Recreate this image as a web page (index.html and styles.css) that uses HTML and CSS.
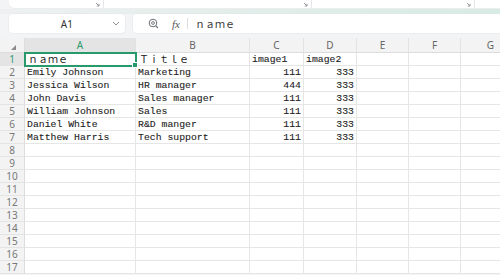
FILE: index.html
```html
<!DOCTYPE html>
<html>
<head>
<meta charset="utf-8">
<link rel="stylesheet" href="styles.css">
</head>
<body>
<div class="app">
  <div class="ribbon-wrap">
    <div class="ribbon">
      <div class="group g1"><svg class="launch" width="5" height="5" viewBox="0 0 5 5"><path d="M1 1 L4 4 M4 1.8 V4 H1.8" stroke="#8a8f94" stroke-width="0.9" fill="none"/></svg></div>
      <div class="group g2"><svg class="launch" width="5" height="5" viewBox="0 0 5 5"><path d="M1 1 L4 4 M4 1.8 V4 H1.8" stroke="#8a8f94" stroke-width="0.9" fill="none"/></svg></div>
      <div class="group g3"><svg class="launch" width="5" height="5" viewBox="0 0 5 5"><path d="M1 1 L4 4 M4 1.8 V4 H1.8" stroke="#8a8f94" stroke-width="0.9" fill="none"/></svg></div>
      <div class="group g4"></div>
    </div>
    <div class="band"></div>
  </div>
  <div class="fbar">
    <div class="namebox">
      <span class="ref">A1</span>
      <svg class="chev" width="8" height="5" viewBox="0 0 8 5"><path d="M1 1 L4 4 L7 1" stroke="#8c9096" stroke-width="1" fill="none"/></svg>
    </div>
    <div class="formula">
      <svg class="zoom" width="11" height="11" viewBox="0 0 11 11"><circle cx="5" cy="5" r="3.8" stroke="#6b7075" stroke-width="1" fill="none"/><circle cx="5" cy="5" r="1.4" stroke="#6b7075" stroke-width="0.9" fill="none"/><path d="M7.8 7.8 L10 10" stroke="#6b7075" stroke-width="1.1"/></svg>
      <span class="fx">fx</span>
      <span class="sep"></span>
      <span class="ftext">ｎａｍｅ</span>
    </div>
  </div>
  <div class="sheet">
    <div class="corner"><span class="tri"></span></div>
    <div class="ch sel">A</div><div class="ch">B</div><div class="ch">C</div><div class="ch">D</div><div class="ch">E</div><div class="ch">F</div><div class="ch">G</div>

    <div class="rh sel">1</div><div class="c active fw">ｎａｍｅ</div><div class="c fw">Ｔｉｔｌｅ</div><div class="c">image1</div><div class="c">image2</div><div class="c"></div><div class="c"></div><div class="c"></div>
    <div class="rh">2</div><div class="c">Emily Johnson</div><div class="c">Marketing</div><div class="c num">111</div><div class="c num">333</div><div class="c"></div><div class="c"></div><div class="c"></div>
    <div class="rh">3</div><div class="c">Jessica Wilson</div><div class="c">HR manager</div><div class="c num">444</div><div class="c num">333</div><div class="c"></div><div class="c"></div><div class="c"></div>
    <div class="rh">4</div><div class="c">John Davis</div><div class="c">Sales manager</div><div class="c num">111</div><div class="c num">333</div><div class="c"></div><div class="c"></div><div class="c"></div>
    <div class="rh">5</div><div class="c">William Johnson</div><div class="c">Sales</div><div class="c num">111</div><div class="c num">333</div><div class="c"></div><div class="c"></div><div class="c"></div>
    <div class="rh">6</div><div class="c">Daniel White</div><div class="c">R&amp;D manger</div><div class="c num">111</div><div class="c num">333</div><div class="c"></div><div class="c"></div><div class="c"></div>
    <div class="rh">7</div><div class="c">Matthew Harris</div><div class="c">Tech support</div><div class="c num">111</div><div class="c num">333</div><div class="c"></div><div class="c"></div><div class="c"></div>
    <div class="rh">8</div><div class="c"></div><div class="c"></div><div class="c"></div><div class="c"></div><div class="c"></div><div class="c"></div><div class="c"></div>
    <div class="rh">9</div><div class="c"></div><div class="c"></div><div class="c"></div><div class="c"></div><div class="c"></div><div class="c"></div><div class="c"></div>
    <div class="rh">10</div><div class="c"></div><div class="c"></div><div class="c"></div><div class="c"></div><div class="c"></div><div class="c"></div><div class="c"></div>
    <div class="rh">11</div><div class="c"></div><div class="c"></div><div class="c"></div><div class="c"></div><div class="c"></div><div class="c"></div><div class="c"></div>
    <div class="rh">12</div><div class="c"></div><div class="c"></div><div class="c"></div><div class="c"></div><div class="c"></div><div class="c"></div><div class="c"></div>
    <div class="rh">13</div><div class="c"></div><div class="c"></div><div class="c"></div><div class="c"></div><div class="c"></div><div class="c"></div><div class="c"></div>
    <div class="rh">14</div><div class="c"></div><div class="c"></div><div class="c"></div><div class="c"></div><div class="c"></div><div class="c"></div><div class="c"></div>
    <div class="rh">15</div><div class="c"></div><div class="c"></div><div class="c"></div><div class="c"></div><div class="c"></div><div class="c"></div><div class="c"></div>
    <div class="rh">16</div><div class="c"></div><div class="c"></div><div class="c"></div><div class="c"></div><div class="c"></div><div class="c"></div><div class="c"></div>
    <div class="rh">17</div><div class="c"></div><div class="c"></div><div class="c"></div><div class="c"></div><div class="c"></div><div class="c"></div><div class="c"></div>
  </div>
</div>
</body>
</html>
```

FILE: styles.css
```css
* { box-sizing: border-box; }
html, body { margin: 0; padding: 0; }
body {
  width: 500px;
  height: 275px;
  overflow: hidden;
  background: #f3f4f5;
  font-family: "Noto Sans", Roboto, sans-serif;
}
.app { display: flex; flex-direction: column; width: 500px; }

.ribbon-wrap { height: 14px; display: flex; flex-direction: column; }
.ribbon {
  margin-left: 9px;
  height: 8px;
  background: #ffffff;
  border-bottom-left-radius: 5px;
  display: flex;
  box-shadow: 0 0.5px 1px rgba(0,0,0,0.06);
}
.group {
  height: 8px;
  border-right: 1px solid #e4e6e8;
  display: flex;
  justify-content: flex-end;
  align-items: flex-start;
  padding: 2px 3px 0 0;
}
.g1 { width: 95px; }
.g2 { width: 208px; }
.g3 { width: 163px; }
.g4 { flex: 1; border-right: none; }
.launch { display: block; }
.band {
  margin-top: 1px;
  height: 5px;
  background: linear-gradient(to right, #eef0f1 0%, #e4eeeb 40%, #d6ebe4 100%);
}

.fbar {
  height: 24px;
  display: flex;
  align-items: flex-start;
  padding-left: 9px;
}
.namebox {
  width: 116px;
  height: 19px;
  background: #fff;
  border-radius: 4px;
  position: relative;
  display: flex;
  align-items: center;
  justify-content: center;
  box-shadow: 0 0 0 0.5px #e3e5e7;
}
.ref { font-size: 10px; color: #333; letter-spacing: 0.2px; }
.chev { position: absolute; right: 5px; top: 7px; }
.formula {
  margin-left: 8px;
  flex: 1;
  height: 19px;
  background: #fff;
  border-radius: 4px 0 0 4px;
  display: flex;
  align-items: center;
  padding-left: 15px;
  box-shadow: 0 0 0 0.5px #e3e5e7;
}
.zoom { display: block; }
.fx {
  margin-left: 13px;
  font-family: "Liberation Serif", serif;
  font-style: italic;
  font-size: 11px;
  color: #555;
}
.sep {
  margin-left: 7px;
  width: 1px;
  height: 11px;
  background: #dcdfe2;
}
.ftext {
  margin-left: 7px;
  font-family: "Noto Sans CJK SC", sans-serif;
  font-size: 10px;
  color: #333;
}

.sheet {
  display: grid;
  grid-template-columns: 25px 111px 114px 54px 53px 52px 52px 60px;
  grid-template-rows: 15px repeat(17, 13px);
  background: #fff;
}
.corner {
  background: #f3f3f3;
  border-right: 1px solid #dedede;
  border-bottom: 1px solid #dedede;
  position: relative;
}
.tri {
  position: absolute;
  left: 11px;
  top: 7px;
  width: 0; height: 0;
  border-left: 5px solid transparent;
  border-bottom: 5px solid #8a8a8a;
}
.ch {
  background: #f3f3f3;
  border-right: 1px solid #e2e2e2;
  border-bottom: 1px solid #dcdcdc;
  font-size: 10px;
  color: #666;
  display: flex;
  align-items: center;
  justify-content: center;
}
.ch.sel { background: #e4e4e4; color: #2c9a6c; }
.rh {
  background: #f3f3f3;
  border-right: 1px solid #dcdcdc;
  border-bottom: 1px solid #e4e4e4;
  font-size: 10px;
  color: #777;
  display: flex;
  align-items: center;
  justify-content: center;
}
.rh.sel { background: #e4e4e4; color: #2c9a6c; }
.c {
  border-right: 1px solid #e6e6e6;
  border-bottom: 1px solid #e6e6e6;
  font-family: "Liberation Mono", monospace;
  font-size: 9.8px;
  color: #222;
  -webkit-text-stroke: 0.1px #222;
  line-height: 12px;
  padding: 1px 2px 0;
  white-space: nowrap;
  overflow: visible;
}
.c.num { text-align: right; }
.c.fw {
  font-family: "Noto Sans CJK SC", sans-serif;
  font-size: 10px;
  line-height: 12px;
  padding: 0 0 0 3px;
  -webkit-text-stroke: 0;
}
.active {
  position: relative;
  outline: 2px solid #27996a;
  outline-offset: -1px;
  z-index: 2;
}
.active::after {
  content: "";
  position: absolute;
  right: -3px;
  bottom: -3px;
  width: 4px;
  height: 4px;
  background: #27996a;
  border: 1px solid #fff;
}
```
